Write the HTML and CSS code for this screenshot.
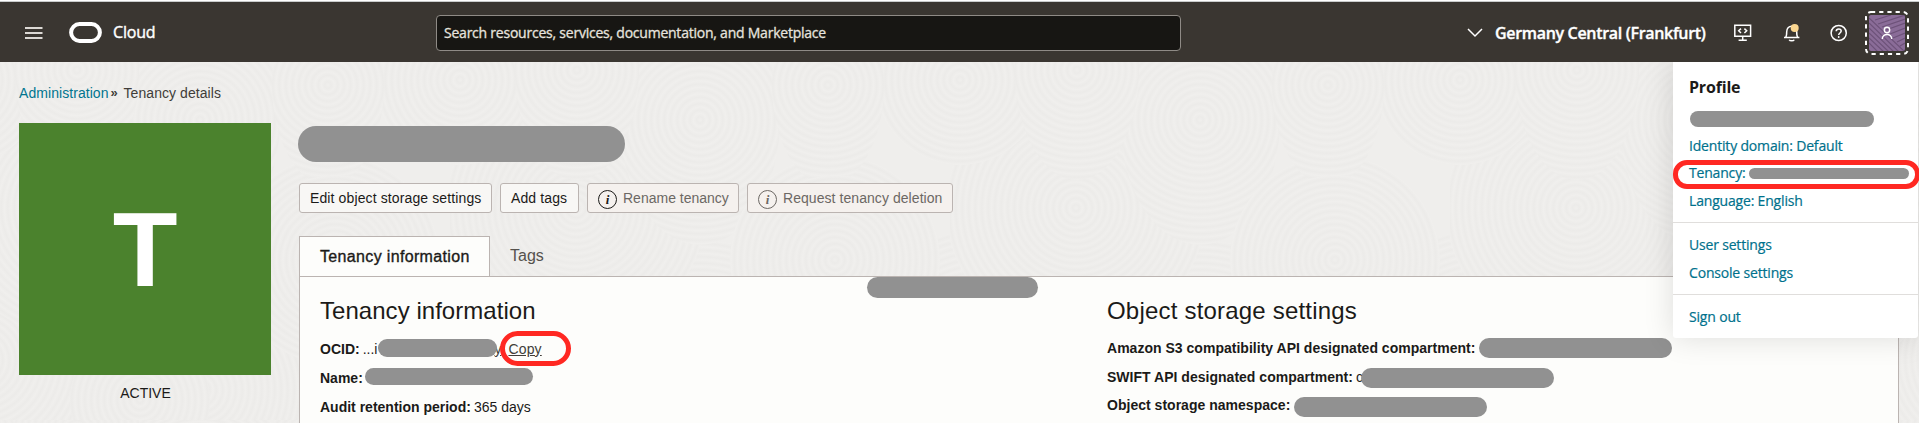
FILE: index.html
```html
<!DOCTYPE html>
<html lang="en">
<head>
<meta charset="utf-8">
<title>Tenancy details</title>
<link rel="stylesheet" href="styles.css">
</head>
<body>
<svg class="texture" width="1919" height="423" aria-hidden="true">
  <defs>
    <radialGradient id="rings" gradientUnits="userSpaceOnUse" cx="0" cy="0" r="6.5" spreadMethod="repeat">
      <stop offset="0" stop-color="#f0efed"/><stop offset=".5" stop-color="#ecebe9"/><stop offset="1" stop-color="#f0efed"/>
    </radialGradient>
    <pattern id="swirl" width="500" height="360" patternUnits="userSpaceOnUse" x="-50" y="60">
      <rect width="500" height="360" fill="#efeeec"/>
      <g fill="url(#rings)">
        <circle r="150" transform="translate(250 330)"/>
        <circle r="130" transform="translate(30 300)"/>
        <circle r="130" transform="translate(530 300)"/>
        <circle r="130" transform="translate(126 148)"/>
        <ellipse rx="80" ry="125" transform="translate(250 60)"/>
        <circle r="105" transform="translate(385 200)"/>
        <circle r="85" transform="translate(10 20)"/>
        <circle r="85" transform="translate(510 20)"/>
        <ellipse rx="62" ry="110" transform="translate(127 10)"/>
        <ellipse rx="56" ry="100" transform="translate(378 25)"/>
        <circle r="85" transform="translate(385 200)"/>
        <circle r="70" transform="translate(190 340)"/>
      </g>
    </pattern>
  </defs>
  <rect width="1919" height="423" fill="url(#swirl)"/>
</svg>

<header class="topbar">
  <svg class="burger" width="18" height="12" viewBox="0 0 18 12"><path d="M0 1h17.5M0 6h17.5M0 11h17.5" stroke="#dcd9d5" stroke-width="1.8"/></svg>
  <svg class="logo" width="34" height="22" viewBox="0 0 34 22"><rect x="2.1" y="2.1" width="28.8" height="16.8" rx="8.4" fill="none" stroke="#fff" stroke-width="4"/></svg>
  <span class="brand">Cloud</span>
  <div class="search"><span>Search resources, services, documentation, and Marketplace</span></div>
  <svg class="chevron" width="16" height="10" viewBox="0 0 16 10"><path d="M1 1l7 7 7-7" fill="none" stroke="#fff" stroke-width="1.5"/></svg>
  <span class="region">Germany Central (Frankfurt)</span>
  <svg class="dev" width="20" height="20" viewBox="0 0 20 20" fill="none" stroke="#fff" stroke-width="1.5"><path d="M1.8 2.3h15.8v11H1.8zM9.7 13.3v3.8M5.6 17.2h8.2M8 5.6L5.7 7.8 8 10M11.4 5.6l2.3 2.2-2.3 2.2"/></svg>
  <svg class="bell" width="20" height="20" viewBox="0 0 20 20" fill="none" stroke="#fff" stroke-width="1.5"><path d="M2 14.4h15.4M3.7 14.2c.9-1 1-2.200 1-5.400 0-3.400 2-5.600 5-5.600s5 2.200 5 5.600c0 3.200.1 4.400 1 5.400M7.200 16.700c.7 1.500 4.300 1.500 5 0"/><circle cx="12.700" cy="5" r="4" fill="#fbd690" stroke="none"/></svg>
  <svg class="help" width="20" height="20" viewBox="0 0 20 20" fill="none" stroke="#fff" stroke-width="1.5"><circle cx="9.700" cy="10" r="7.600"/><path d="M7.200 8.300c0-1.500 1-2.400 2.500-2.400s2.500.9 2.500 2.200c0 1.900-2.500 1.900-2.500 3.800"/><circle cx="9.700" cy="14" r=".9" fill="#fff" stroke="none"/></svg>
  <svg class="avatar" width="44" height="44" viewBox="0 0 44 44">
    <defs>
      <clipPath id="face"><rect x="4" y="4" width="36" height="36" rx="2"/></clipPath>
    </defs>
    <rect x="4" y="4" width="36" height="36" rx="2" fill="#8a6c98"/>
    <g clip-path="url(#face)" fill="none" stroke="#6d5279" stroke-width="1.200">
      <path d="M4 7l36 34M4 12l30 29M4 17l25 24M4 22l20 19M4 27l15 14M4 32l9 9M10 9l16-5M13 13l27-9M17 16l23-8M21 19l19-7M25 23l15-6M28 27l12-5M32 31l8-4M35 35l5-3"/>
    </g>
    <rect x="1" y="1" width="42" height="42" rx="5" fill="none" stroke="#fff" stroke-width="2" stroke-dasharray="4.200 4"/>
    <g fill="none" stroke="#fff" stroke-width="1.400"><circle cx="22" cy="19" r="2.700"/><path d="M17.300 28c0-6 9.400-6 9.400 0"/></g>
  </svg>
</header>

<main class="page">
  <nav class="crumbs"><a>Administration</a><b>»</b><span>Tenancy details</span></nav>
  <div class="layout">
    <aside class="status">
      <div class="tile">T</div>
      <p>ACTIVE</p>
    </aside>
    <section class="content">
      <div class="mask title-mask"></div>
      <div class="actions">
        <button class="b1">Edit object storage settings</button>
        <button class="b2">Add tags</button>
        <button class="b3 off"><i class="dark">i</i>Rename tenancy</button>
        <button class="b4 off"><i>i</i>Request tenancy deletion</button>
      </div>
      <div class="tabs"><div class="tab on">Tenancy information</div><div class="tab">Tags</div></div>
      <div class="panel">
        <div class="col">
          <h2>Tenancy information</h2>
          <div class="row"><b>OCID:</b><span>...i</span><div class="mask m-ocid"></div><u class="tail">y</u><u class="copy">Copy</u></div>
          <div class="row"><b>Name:</b><div class="mask m-name"></div></div>
          <div class="row"><b>Audit retention period:</b><span>365 days</span></div>
        </div>
        <div class="col right">
          <h2>Object storage settings</h2>
          <div class="row"><b>Amazon S3 compatibility API designated compartment:</b><div class="mask m-s3"></div></div>
          <div class="row"><b>SWIFT API designated compartment:</b><span>c</span><div class="mask m-swift"></div></div>
          <div class="row"><b>Object storage namespace:</b><div class="mask m-ns"></div></div>
        </div>
      </div>
    </section>
  </div>
</main>

<aside class="menu">
  <h3>Profile</h3>
  <a><div class="mask m-user"></div></a>
  <a>Identity domain: Default</a>
  <a>Tenancy:<div class="mask m-ten"></div></a>
  <a>Language: English</a>
  <hr>
  <a>User settings</a>
  <a>Console settings</a>
  <hr>
  <a>Sign out</a>
</aside>
<div class="mask float-mask"></div>
<div class="mark mark-copy"></div>
<div class="mark mark-tenancy"></div>
</body>
</html>
```
FILE: styles.css
```css
* { box-sizing: border-box; }
body { margin: 0; width: 1919px; height: 423px; overflow: hidden; position: relative; background: #efeeec; color: #1b1a18; font: 14px/20px "Liberation Sans", Arial, sans-serif; white-space: nowrap; }
.texture { position: absolute; left: 0; top: 0; z-index: -1; }

.topbar { display: flex; align-items: center; height: 62px; padding: 2px 0 0 25px; border-top: 1px solid #fff; background: #3a3631; box-shadow: inset 0 1px #c9cccc; color: #fff; font-family: "Open Sans", "Noto Sans", sans-serif; }
.topbar > * { flex: none; }
.burger { margin-right: 26px; }
.logo { margin-right: 10px; }
.brand { width: 323px; margin-top: -1px; font-size: 16px; letter-spacing: -.2px; -webkit-text-stroke: .4px #fff; }
.search { display: flex; align-items: center; width: 745px; height: 36px; padding-left: 7px; border: 1px solid #8f8b86; border-radius: 4px; background: #171613; color: #e6e3de; font-size: 14px; letter-spacing: -.23px; -webkit-text-stroke: .3px #e6e3de; }
.chevron { margin: 0 12px 0 286px; }
.region { width: 238px; font-size: 16px; font-weight: 600; letter-spacing: -.32px; -webkit-text-stroke: .35px #fff; }
.dev { margin-right: 29px; }
.bell { margin-right: 27px; }
.help { margin-right: 16px; }

.page { padding: 21px 0 0 19px; }
.crumbs { display: flex; height: 40px; color: #403d39; letter-spacing: .06px; }
.crumbs a { color: #00758f; }
.crumbs b { width: 15px; padding-left: 2px; font-size: 13px; }
.layout { display: flex; gap: 27px; }
.status { width: 252px; text-align: center; }
.status p { margin: 8px 0 0 1px; }
.tile { height: 252px; background: #4b822d; color: #fff; font-size: 106px; font-weight: 700; line-height: 252px; }
.content { width: 1601px; }
.mask { flex: none; border-radius: 99px; background: #919191; }
.title-mask { width: 327px; height: 36px; margin-top: 3px; }
.actions { display: flex; gap: 8px; margin: 21px 0 0 1px; }
.actions button { display: flex; align-items: center; height: 30px; padding: 0 0 0 10px; border: 1px solid #bbb4b1; border-radius: 3px; background: #f8f7f5; color: #1b1a18; font: inherit; letter-spacing: .12px; }
.actions .b1 { width: 193px; }
.actions .b2 { width: 79px; }
.actions .b3 { width: 152px; letter-spacing: 0; }
.actions .b4 { width: 206px; letter-spacing: .06px; }
.actions .off { background: #f5f1ee; color: #6c6864; }
.actions i { width: 19px; height: 19px; margin: 3px 6px 0 0; border: 1px solid #6c6864; border-radius: 50%; font: italic bold 13px/17px "Liberation Serif", serif; text-align: center; }
.actions .dark { color: #1b1a18; border-color: #1b1a18; }
.tabs { display: flex; margin: 23px 0 0 1px; }
.tab { height: 40px; padding: 10px 20px; font-size: 16px; color: #55514d; }
.tab.on { position: relative; width: 191px; margin-bottom: -1px; padding-left: 20px; border: 1px solid #bbb4b1; border-bottom: 0; background: #fdfdfb; color: #1b1a18; letter-spacing: .34px; -webkit-text-stroke: .35px #1b1a18; }
.panel { display: flex; height: 148px; margin-left: 1px; padding: 20px 20px 0; border: 1px solid #bbb4b1; border-bottom: 0; background: #fdfdfb; }
.col { flex: none; width: 787px; }
h2 { margin: 0 0 9px; font-size: 24px; font-weight: 400; line-height: 28px; letter-spacing: .04px; }
.right h2 { letter-spacing: .2px; }
.row { display: flex; align-items: center; height: 29px; }
.right .row { height: 28.5px; letter-spacing: .02px; }
.row b + span { margin-left: 3px; }

.menu { position: absolute; left: 1673px; top: 62px; width: 245px; height: 276px; padding: 11px 0 0 16px; background: #fff; border-radius: 0 0 3px 3px; box-shadow: 0 0 30px rgba(0,0,0,.13); color: #00718c; font: 14px/28px "Open Sans", "Noto Sans", sans-serif; letter-spacing: -.18px; clip-path: inset(0 -60px -80px -60px); -webkit-text-stroke: .2px #00718c; }
.menu h3 { margin: 0 0 3.5px; color: #1b1a18; font-size: 16px; font-weight: 700; line-height: 28px; -webkit-text-stroke: 0; }
.menu a { display: flex; align-items: center; height: 27.6px; }
.menu hr { height: 1px; margin: 7px 0 8.5px -16px; border: 0; background: #e0dedc; }
.m-user { width: 184px; height: 16px; margin: 1px 0 0 1px; }
.m-ten { width: 160px; height: 11px; margin-left: 4px; }
.m-ocid { width: 119px; height: 18px; margin: 0 -3px 2px 1px; z-index: 1; }
.copy { margin-left: 7px; color: #403d39; letter-spacing: .15px; }
.tail { color: #403d39; }
.m-name { width: 168px; height: 17px; margin: 0 0 2px 2px; }
.m-s3, .m-swift, .m-ns { width: 193px; height: 20px; margin-left: 4px; }
.m-swift { margin: 3px 0 0 -2px; }
.m-ns { margin-top: 3px; }
.float-mask { position: absolute; left: 867px; top: 277px; width: 171px; height: 21px; }
.mark { position: absolute; border: 5px solid #ff2822; }
.mark-copy { left: 500px; top: 331px; width: 71px; height: 35px; border-radius: 18px; }
.mark-tenancy { left: 1673px; top: 160px; width: 247px; height: 29px; border-radius: 14px; }
```
